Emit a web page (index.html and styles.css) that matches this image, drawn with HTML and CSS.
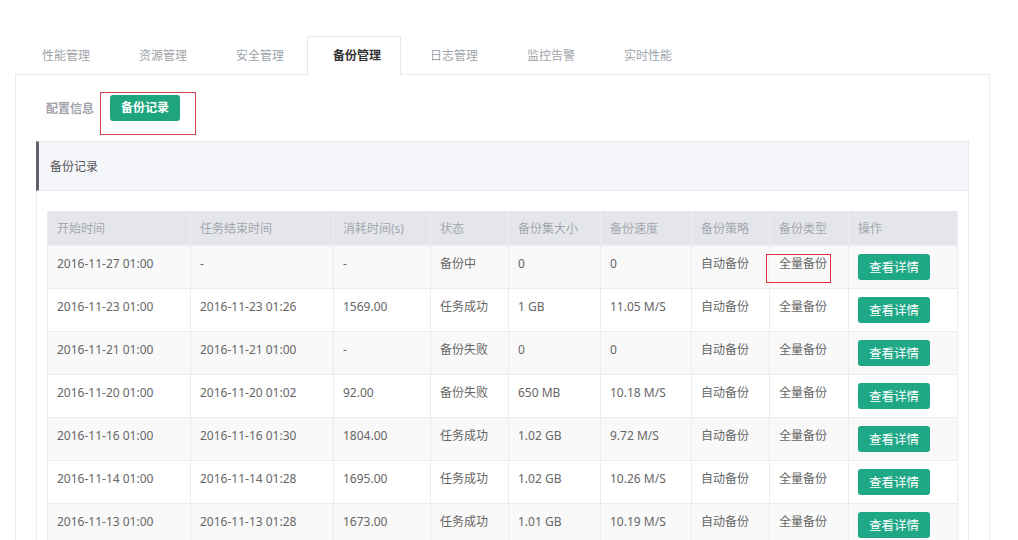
FILE: index.html
```html
<!DOCTYPE html>
<html lang="zh-CN">
<head>
<meta charset="utf-8">
<title>备份管理</title>
<link rel="stylesheet" href="styles.css">
</head>
<body>
<div class="page">
  <nav class="tabs">
    <a class="tab">性能管理</a>
    <a class="tab">资源管理</a>
    <a class="tab">安全管理</a>
    <a class="tab active">备份管理</a>
    <a class="tab">日志管理</a>
    <a class="tab">监控告警</a>
    <a class="tab">实时性能</a>
  </nav>
  <div class="panel">
    <div class="subnav">
      <a class="sublink">配置信息</a>
      <span class="btn-wrap"><a class="btn-primary">备份记录</a><span class="mark mark-btn"></span></span>
    </div>
    <section class="section">
      <header class="section-head">备份记录</header>
      <div class="section-body">
        <table class="grid">
          <colgroup>
            <col style="width:143px"><col style="width:143px"><col style="width:97px"><col style="width:78px"><col style="width:92px"><col style="width:91px"><col style="width:78px"><col style="width:79px"><col style="width:109px">
          </colgroup>
          <thead>
            <tr><th>开始时间</th><th>任务结束时间</th><th>消耗时间(s)</th><th>状态</th><th>备份集大小</th><th>备份速度</th><th>备份策略</th><th>备份类型</th><th>操作</th></tr>
          </thead>
          <tbody>
            <tr><td>2016-11-27 01:00</td><td>-</td><td>-</td><td>备份中</td><td>0</td><td>0</td><td>自动备份</td><td class="rel"><span class="cell-text">全量备份</span><span class="cell-mark"></span></td><td><a class="btn-view">查看详情</a></td></tr>
            <tr><td>2016-11-23 01:00</td><td>2016-11-23 01:26</td><td>1569.00</td><td>任务成功</td><td>1 GB</td><td>11.05 M/S</td><td>自动备份</td><td>全量备份</td><td><a class="btn-view">查看详情</a></td></tr>
            <tr><td>2016-11-21 01:00</td><td>2016-11-21 01:00</td><td>-</td><td>备份失败</td><td>0</td><td>0</td><td>自动备份</td><td>全量备份</td><td><a class="btn-view">查看详情</a></td></tr>
            <tr><td>2016-11-20 01:00</td><td>2016-11-20 01:02</td><td>92.00</td><td>备份失败</td><td>650 MB</td><td>10.18 M/S</td><td>自动备份</td><td>全量备份</td><td><a class="btn-view">查看详情</a></td></tr>
            <tr><td>2016-11-16 01:00</td><td>2016-11-16 01:30</td><td>1804.00</td><td>任务成功</td><td>1.02 GB</td><td>9.72 M/S</td><td>自动备份</td><td>全量备份</td><td><a class="btn-view">查看详情</a></td></tr>
            <tr><td>2016-11-14 01:00</td><td>2016-11-14 01:28</td><td>1695.00</td><td>任务成功</td><td>1.02 GB</td><td>10.26 M/S</td><td>自动备份</td><td>全量备份</td><td><a class="btn-view">查看详情</a></td></tr>
            <tr><td>2016-11-13 01:00</td><td>2016-11-13 01:28</td><td>1673.00</td><td>任务成功</td><td>1.01 GB</td><td>10.19 M/S</td><td>自动备份</td><td>全量备份</td><td><a class="btn-view">查看详情</a></td></tr>
          </tbody>
        </table>
      </div>
    </section>
  </div>
</div>
</body>
</html>
```

FILE: styles.css
```css
html, body {
  margin: 0;
  padding: 0;
  background: #fff;
}
body {
  font-family: "Noto Sans", "Noto Sans CJK SC", sans-serif;
  font-size: 12px;
  color: #666;
  overflow: hidden;
  height: 540px;
}
.page {
  padding: 36px 0 0 15px;
  width: 975px;
}
.tabs {
  display: flex;
  height: 38px;
  position: relative;
  z-index: 1;
}
.tab {
  box-sizing: border-box;
  width: 94px;
  margin-right: 3px;
  height: 39px;
  padding-left: 25px;
  line-height: 38px;
  color: #a0a3a9;
  border: 1px solid transparent;
  border-bottom: 0;
  white-space: nowrap;
}
.tab:first-child {
  margin-left: 1px;
}
.tab.active {
  background: #fff;
  border-color: #e6e6e6;
  border-radius: 2px 2px 0 0;
  color: #333;
  font-weight: 700;
}
.panel {
  border: 1px solid #ebebeb;
  padding: 20px 20px 40px;
  height: 500px;
}
.subnav {
  display: flex;
  align-items: center;
  padding-left: 10px;
  height: 26px;
  gap: 16px;
}
.sublink {
  color: #a0a3a9;
  font-weight: 700;
}
.btn-wrap {
  position: relative;
  display: inline-block;
}
.btn-primary {
  display: block;
  width: 70px;
  height: 26px;
  line-height: 26px;
  text-align: center;
  background: #1ea57e;
  color: #fff;
  font-weight: 700;
  border-radius: 3px;
}
.mark {
  position: absolute;
  border: 1px solid #d4434c;
  box-sizing: border-box;
}
.mark-btn {
  left: -10px;
  top: -3px;
  width: 96px;
  height: 43px;
}
.section {
  margin-top: 20px;
}
.section-head {
  box-sizing: border-box;
  height: 50px;
  line-height: 49px;
  background: #f5f6fa;
  border: 1px solid #e5e7ec;
  border-left: 3px solid #5e6268;
  padding-left: 11px;
  color: #555;
}
.section-body {
  border: 1px solid #eeeeee;
  border-top: 0;
  padding: 20px 11px 20px 10px;
}
.grid {
  width: 910px;
  table-layout: fixed;
  border-collapse: collapse;
}
.grid th {
  background: #e5e6eb;
  color: #a3a6ad;
  font-weight: 400;
  text-align: left;
  height: 34px;
  padding: 0 9px;
  border: 1px solid #eceef1;
  border-top: 0;
  white-space: nowrap;
}
.grid td {
  border: 1px solid #ececec;
  height: 43px;
  box-sizing: border-box;
  padding: 8px 9px 0;
  vertical-align: top;
  line-height: 20px;
  white-space: nowrap;
  color: #666;
}
.grid tbody tr:nth-child(odd) td {
  background: #f9f9f9;
}
.rel {
  position: relative;
}
.cell-mark {
  position: absolute;
  left: -3px;
  top: 9px;
  width: 63px;
  height: 27px;
  outline: 1px solid #e0303c;
  pointer-events: none;
}
.btn-view {
  display: inline-block;
  vertical-align: top;
  width: 72px;
  height: 26px;
  line-height: 27px;
  margin-top: 0;
  text-align: center;
  background: #1ea886;
  color: #fff;
  border-radius: 3px;
  font-size: 12.5px;
}
```
